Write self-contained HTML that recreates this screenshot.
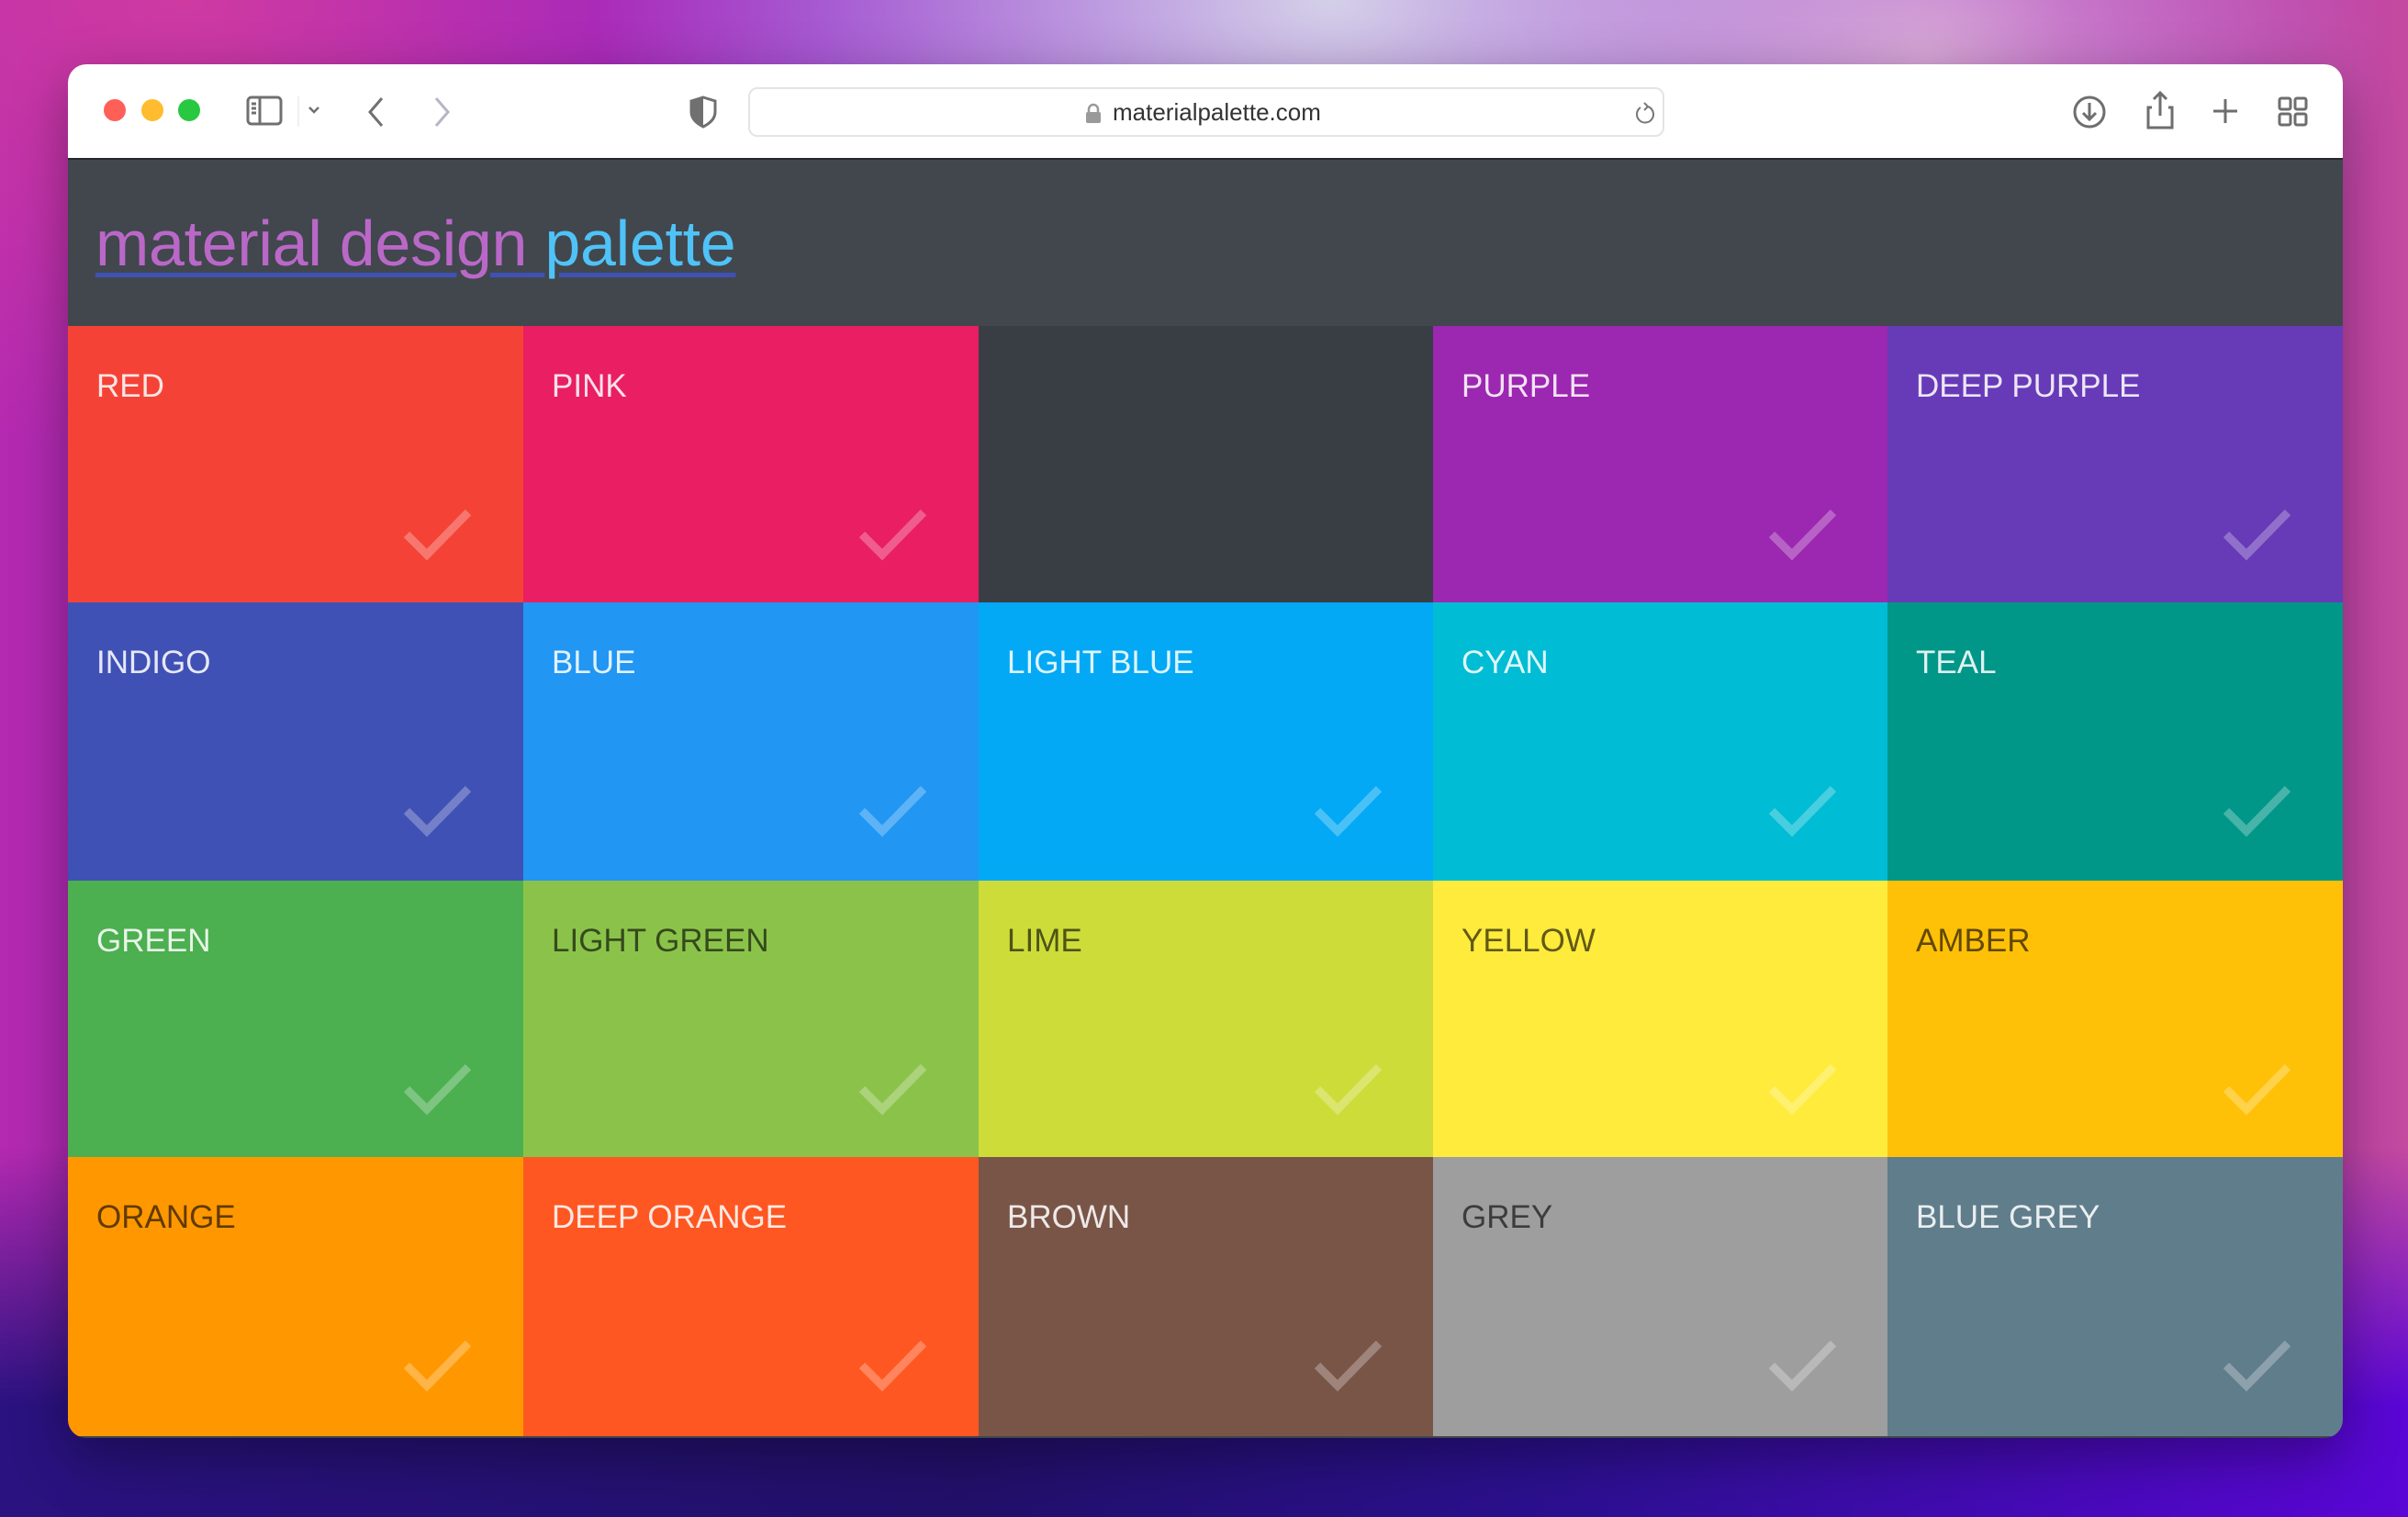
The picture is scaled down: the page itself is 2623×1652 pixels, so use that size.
<!DOCTYPE html>
<html><head><meta charset="utf-8"><style>
*{margin:0;padding:0;box-sizing:border-box}
html,body{width:2623px;height:1652px;overflow:hidden}
body{position:relative;font-family:"Liberation Sans",sans-serif;
background:
radial-gradient(ellipse 800px 500px at 1450px 0px,rgba(212,208,232,1),rgba(212,208,232,0) 100%),
radial-gradient(ellipse 500px 400px at 2100px 60px,rgba(220,170,210,.9),rgba(220,170,210,0) 100%),
radial-gradient(ellipse 700px 500px at 200px 0px,rgba(210,60,160,.9),rgba(210,60,160,0) 100%),
linear-gradient(90deg,#b42ab0 0%,#9a22c0 20%,#8a2ad0 50%,#9a1ec8 80%,#c44aa0 100%);}
.bl{position:absolute;left:0;top:1250px;width:2623px;height:402px;background:linear-gradient(90deg,#2a1280 0%,#22106a 40%,#2c1090 65%,#5a06d6 100%);-webkit-mask-image:linear-gradient(180deg,transparent 0,#000 70%);mask-image:linear-gradient(180deg,transparent 0,#000 70%)}
.win{position:absolute;left:74px;top:70px;width:2478px;height:1496px;border-radius:20px;overflow:hidden;background:#3f454b;box-shadow:0 20px 60px rgba(0,0,0,.35)}
.tb{position:absolute;left:0;top:0;width:100%;height:104px;background:#fff;border-bottom:2px solid #25282c}
.dot{position:absolute;top:38px;width:24px;height:24px;border-radius:50%}
.hdr{position:absolute;left:0;top:104px;width:100%;height:181px;background:#41474d}
.title{position:absolute;left:30px;top:160px;font-size:70px;letter-spacing:-0.3px;line-height:1;white-space:nowrap;text-decoration:underline;text-decoration-color:#3f51b5;text-decoration-thickness:5px;text-underline-offset:8px}
.c{position:absolute;width:496px}
.c span{position:absolute;left:31px;top:46px;font-size:35px;color:rgba(255,255,255,.87);white-space:nowrap}
.c.d span{color:rgba(0,0,0,.62)}
.c svg{position:absolute;left:366px;top:198px}
.url{position:absolute;left:741px;top:25px;width:998px;height:54px;border:2px solid #e4e4e6;border-radius:10px;background:#fff}
</style></head><body>
<div class="bl"></div>
<div class="win">
 <div class="tb">
  <div class="dot" style="left:39px;background:#fe5f57"></div>
  <div class="dot" style="left:80px;background:#febc2e"></div>
  <div class="dot" style="left:120px;background:#28c840"></div>
  <svg style="position:absolute;left:190px;top:30px" width="100" height="44" viewBox="0 0 100 44" fill="none" stroke="#707070" stroke-width="3">
   <rect x="6" y="6" width="36" height="29" rx="4"/><line x1="19" y1="6" x2="19" y2="35"/>
   <line x1="10" y1="13" x2="15" y2="13"/><line x1="10" y1="18" x2="15" y2="18"/><line x1="10" y1="23" x2="15" y2="23"/>
   <line x1="61" y1="5" x2="61" y2="38" stroke="#e0e0e0" stroke-width="1"/>
   <polyline points="73,17 78,22 83,17" stroke-width="2.5"/>
  </svg>
  <svg style="position:absolute;left:320px;top:34px" width="200" height="40" viewBox="0 0 200 40" fill="none" stroke-width="3">
   <polyline points="22,3 9,18 22,33" stroke="#707070"/>
   <polyline points="81,3 94,18 81,33" stroke="#b8b4c8"/>
  </svg>
  <svg style="position:absolute;left:676px;top:34px" width="32" height="36" viewBox="0 0 32 36">
   <path d="M16 2 L29 6 V18 C29 26 22 31 16 34 C10 31 3 26 3 18 V6 Z" fill="none" stroke="#707070" stroke-width="3"/>
   <path d="M16 2 L3 6 V18 C3 26 10 31 16 34 Z" fill="#707070"/>
  </svg>
  <div class="url">
   <svg style="position:absolute;left:364px;top:15px" width="20" height="24" viewBox="0 0 20 24"><path d="M5 11 V7 a5 5 0 0 1 10 0 V11" fill="none" stroke="#9a9a9a" stroke-width="2.5"/><rect x="2" y="10" width="16" height="12" rx="2" fill="#9a9a9a"/></svg>
   <div style="position:absolute;left:395px;top:10px;font-size:26px;color:#333;">materialpalette.com</div>
   <svg style="position:absolute;left:962px;top:13px" width="26" height="28" viewBox="0 0 26 28" fill="none" stroke="#777" stroke-width="2"><path d="M16 6 A9 9 0 1 1 8 7"/><polyline points="12,2 16,6 12,10"/></svg>
  </div>
  <svg style="position:absolute;left:2180px;top:28px" width="290" height="48" viewBox="0 0 290 48" fill="none" stroke="#6e6e6e" stroke-width="3">
   <circle cx="22" cy="24" r="16"/><line x1="22" y1="14" x2="22" y2="32"/><polyline points="15,25 22,32 29,25"/>
   <path d="M90 19 H86 V41 H112 V19 H108"/><line x1="99" y1="3" x2="99" y2="28"/><polyline points="92,10 99,3 106,10"/>
   <line x1="170" y1="10" x2="170" y2="36"/><line x1="157" y1="23" x2="183" y2="23"/>
   <rect x="229" y="9" width="12" height="12" rx="2"/><rect x="246" y="9" width="12" height="12" rx="2"/><rect x="229" y="26" width="12" height="12" rx="2"/><rect x="246" y="26" width="12" height="12" rx="2"/>
  </svg>
 </div>
 <div class="hdr"></div>
 <div class="title"><span style="color:#ba68c8">material design</span> <span style="color:#4fc3f7">palette</span></div>
 <div id="g"></div>
</div>
<script>
var D=[["RED","#f44336",0],["PINK","#e91e63",0],["","#393e45",0],["PURPLE","#9c27b0",0],["DEEP PURPLE","#673ab7",0],
["INDIGO","#3f51b5",0],["BLUE","#2196f3",0],["LIGHT BLUE","#03a9f4",0],["CYAN","#00bcd4",0],["TEAL","#009688",0],
["GREEN","#4caf50",0],["LIGHT GREEN","#8bc34a",1],["LIME","#cddc39",1],["YELLOW","#ffeb3b",1],["AMBER","#ffc107",1],
["ORANGE","#ff9800",1],["DEEP ORANGE","#ff5722",0],["BROWN","#795548",0],["GREY","#9e9e9e",1],["BLUE GREY","#607d8b",0]];
var L=[0,496,992,1487,1982,2478],T=[285,586,889,1190,1494],h="";
D.forEach(function(d,i){var r=Math.floor(i/5),c=i%5;
h+='<div class="c'+(d[2]?' d':'')+'" style="left:'+L[c]+'px;width:'+(L[c+1]-L[c])+'px;top:'+T[r]+'px;height:'+(T[r+1]-T[r])+'px;background:'+d[1]+'"><span>'+d[0]+'</span>'+(i==2?'':'<svg width="74" height="60" viewBox="0 0 74 60"><polyline points="3,29 25,51 70,5" fill="none" stroke="rgba(255,255,255,.28)" stroke-width="9"/></svg>')+'</div>';});
document.getElementById("g").innerHTML=h;
</script>
</body></html>
